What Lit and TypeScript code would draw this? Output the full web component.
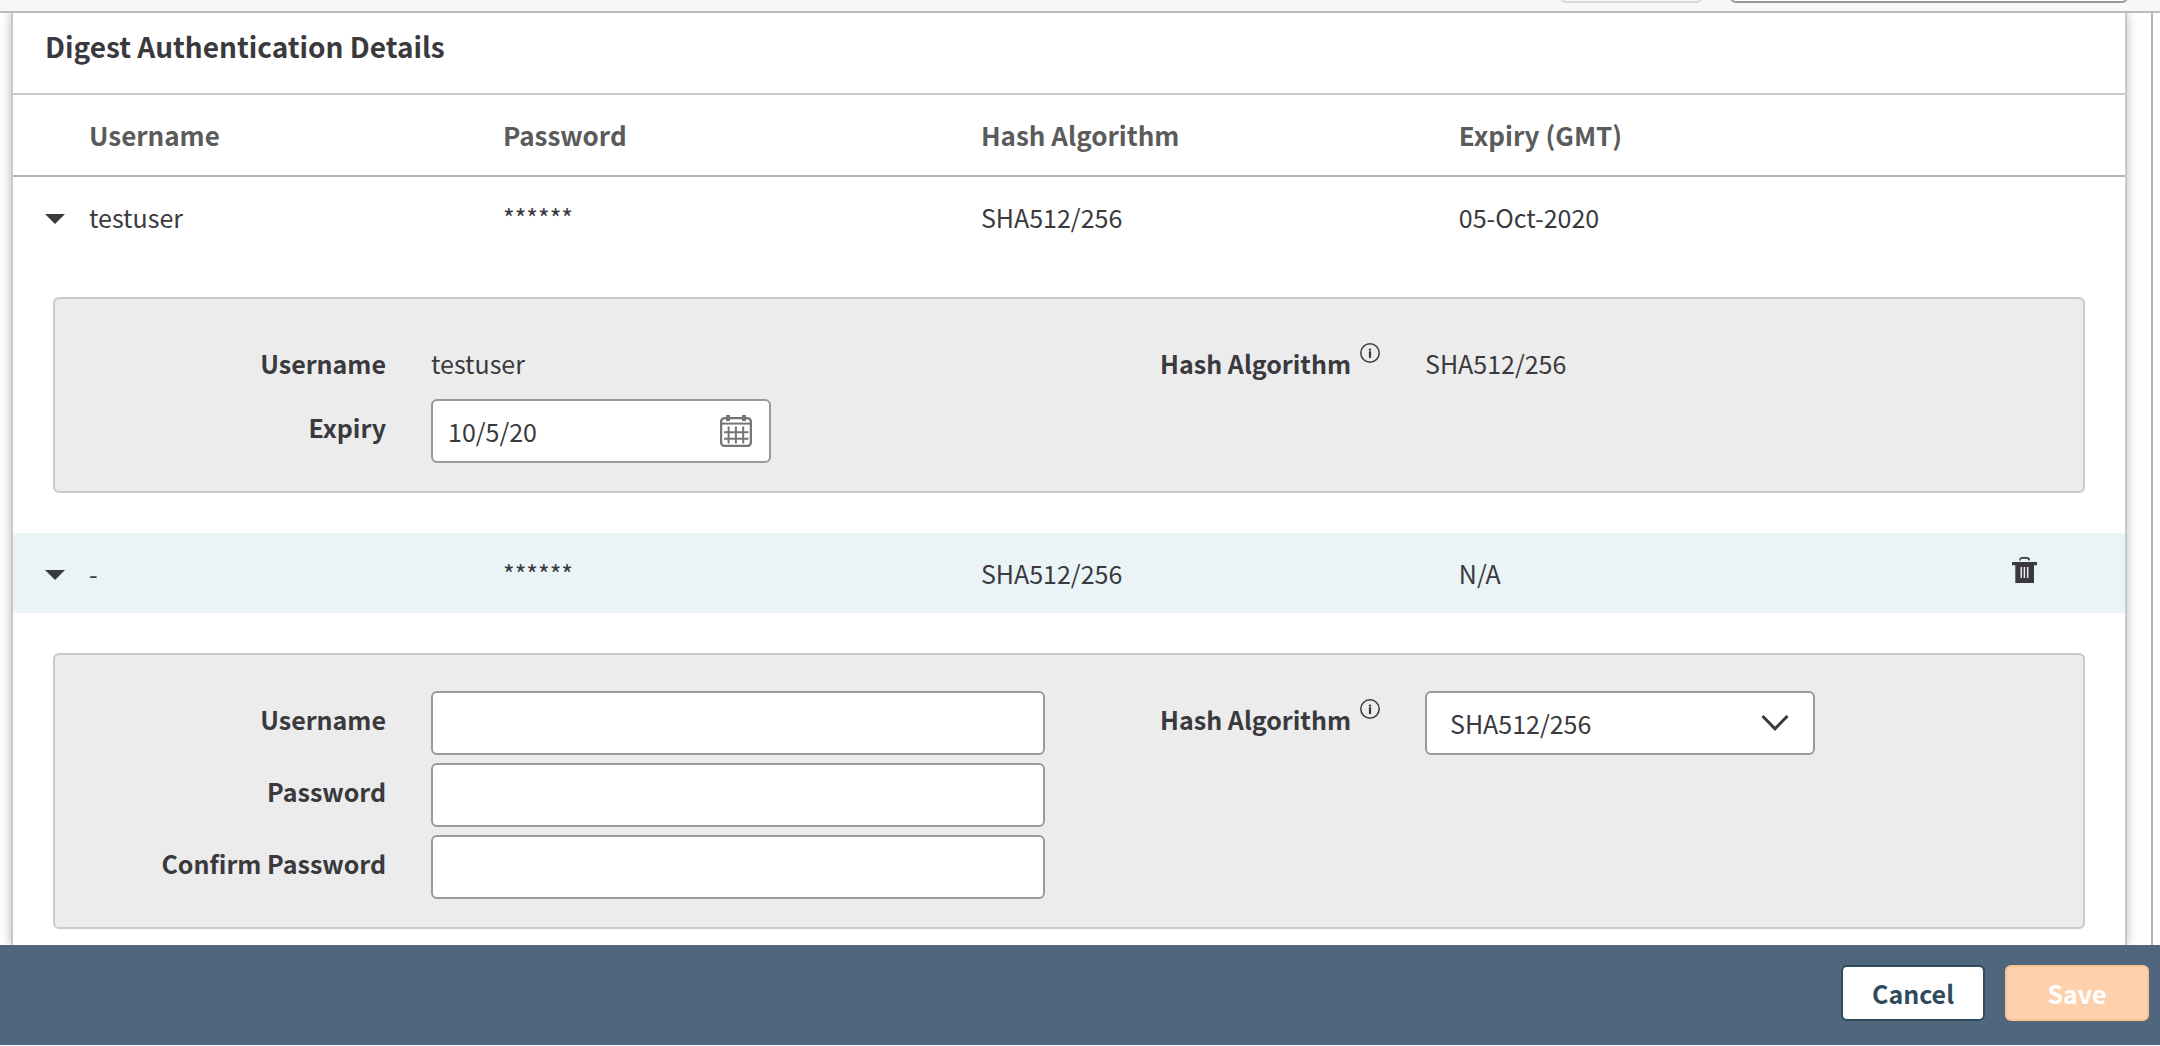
import { LitElement, html, css, svg, nothing } from "lit";
import { customElement, state } from "lit/decorators.js";

interface Credential {
  id: string;
  username: string;
  password: string;
  algorithm: string;
  expiry: string;
  saved: boolean;
}

const caretIcon = svg`<svg class="caret" viewBox="0 0 20 10" width="20" height="10" aria-hidden="true"><path d="M0 0H20L10 10Z" fill="currentColor"/></svg>`;

const infoIcon = svg`<svg class="info" viewBox="0 0 20 20" width="20" height="20" role="img" aria-label="Information"><circle cx="10" cy="10" r="9.2" fill="none" stroke="currentColor" stroke-width="1.5"/><path d="M10 9.2V14.2" stroke="currentColor" stroke-width="2.2" stroke-linecap="round"/><circle cx="10" cy="6.6" r="1.2" fill="currentColor"/></svg>`;

const calendarIcon = svg`<svg viewBox="0 0 32 32" width="32" height="32" aria-hidden="true"><g fill="none" stroke="#757575" stroke-width="2"><rect x="1.1" y="3.1" width="29.8" height="27.8" rx="3.5" stroke-width="2.300"/><path d="M1 8.6H31"/><path d="M8.6 11.5V28.5M15.9 11.5V28.5M23.2 11.5V28.5M4 17.2H28.5M4 23.8H28.5"/></g><path d="M6 0H10V6H6ZM22 0H26V6H22Z" fill="#757575"/></svg>`;

const trashIcon = svg`<svg viewBox="0 0 25 26" width="25" height="26" aria-hidden="true"><path d="M8 3.4C8 1.4 9 .9 10.5 .9H14.5C16 .9 17.2 1.4 17.2 3.4" fill="none" stroke="currentColor" stroke-width="1.6"/><path fill="currentColor" d="M0 5H25V8.3H22V26H3.3V8.3H0Z"/><path d="M9.3 10V21M12.4 10V21M15.7 10V21" stroke="#e6ecee" stroke-width="1.5"/></svg>`;

const chevronIcon = svg`<svg class="chevron" viewBox="0 0 28 18" width="28" height="18" aria-hidden="true"><path d="M1.5 2L14 14.8L26.500 2" fill="none" stroke="currentColor" stroke-width="3"/></svg>`;

@customElement("app-root")
export class AppRoot extends LitElement {
  static styles = css`
    :host {
      display: flex;
      flex-direction: column;
      box-sizing: border-box;
      min-height: 100vh;
      background: #fff;
      color: #3a393e;
      font: 25px/40px "Noto Sans CJK SC", "Noto Sans", sans-serif;
    }
    * {
      box-sizing: border-box;
    }
    .toolbar {
      display: flex;
      align-items: flex-end;
      justify-content: flex-end;
      gap: 28px;
      height: 13px;
      overflow: hidden;
      padding: 0 32px 8px 0;
      background: #f7f7f7;
      border-bottom: 2px solid #bbb;
    }
    .tool,
    .search {
      flex: none;
      height: 56px;
      border: 2px solid #d8d8d8;
      border-radius: 6px;
      background: #f7f7f7;
    }
    .tool {
      width: 142px;
    }
    .search {
      width: 398px;
      border-color: #999;
      background: #fff;
    }
    .content {
      flex: 1;
      display: flex;
      margin-right: 7px;
      padding: 0 24px 0 11px;
      border-right: 2px solid #b5b5b5;
      overflow: hidden;
    }
    .card {
      flex: 1;
      min-width: 0;
      border: solid #c9c9c9;
      border-width: 0 2px;
      box-shadow: 0 0 10px rgba(0, 0, 0, 0.28);
      padding-bottom: 16px;
    }
    .title {
      margin: 0;
      padding: 0 32px 14px;
      font-size: 28px;
      line-height: 66px;
      font-weight: 700;
    }
    .grid {
      width: 100%;
      table-layout: fixed;
      border-spacing: 0;
      border-top: 2px solid #cacaca;
    }
    .col-caret {
      width: 3.6%;
    }
    .col-user {
      width: 19.6%;
    }
    .col-data {
      width: 22.63%;
    }
    .head {
      height: 82px;
      padding: 0;
      border-bottom: 2px solid #b4b4b4;
      color: #5b5b5b;
      font-size: 26px;
      font-weight: 700;
      text-align: left;
    }
    .cell {
      height: 80px;
      padding: 0;
    }
    .draft .cell {
      background: #eaf4f7;
    }
    .icon-button {
      display: flex;
      padding: 0;
      border: 0;
      background: none;
      color: inherit;
      cursor: pointer;
    }
    .toggle {
      padding: 17px 32px 13px;
    }
    .closed .caret {
      transform: rotate(-90deg);
    }
    .remove {
      margin: 0 auto;
      padding: 8px 12px 14px 0;
    }
    .detail {
      padding: 40px;
    }
    .detail-last {
      padding-bottom: 0;
    }
    .panel {
      display: grid;
      grid-template-columns: 1fr 1fr;
      padding: 36px 20px 28px;
      border: 2px solid #cacaca;
      border-radius: 6px;
      background: #ececec;
    }
    .fields {
      display: flex;
      flex-direction: column;
      gap: 8px;
    }
    .field {
      display: grid;
      grid-template-columns: minmax(0, 311fr) minmax(0, 638fr);
      gap: 45px;
      align-items: start;
    }
    .label {
      display: flex;
      align-items: center;
      justify-content: flex-end;
      gap: 9px;
      line-height: 56px;
      font-weight: 700;
      white-space: nowrap;
    }
    .info {
      margin-bottom: 20px;
    }
    .value {
      line-height: 56px;
    }
    .control {
      position: relative;
      display: flex;
      align-items: center;
      height: 64px;
      max-width: 614px;
      border: 2px solid #999;
      border-radius: 6px;
      background: #fff;
    }
    .control-date {
      max-width: 340px;
      padding-right: 17px;
    }
    .control-select {
      max-width: 390px;
    }
    .input,
    .select {
      flex: 1;
      min-width: 0;
      width: 100%;
      height: 100%;
      padding: 0 15px;
      border: 0;
      border-radius: 4px;
      background: none;
      color: inherit;
      font: inherit;
    }
    .select {
      appearance: none;
      padding: 0 60px 0 23px;
    }
    .chevron {
      position: absolute;
      right: 24px;
      pointer-events: none;
    }
    .footer {
      display: flex;
      justify-content: flex-end;
      gap: 20px;
      height: 100px;
      margin-bottom: 1px;
      padding: 20px 11px;
      background: #50667c;
    }
    .action {
      width: 144px;
      height: 56px;
      padding: 0;
      border: 2px solid #304a5d;
      border-radius: 6px;
      background: #fff;
      color: #304a5d;
      font: inherit;
      font-weight: 700;
    }
    .action-save {
      border-color: #fcc294;
      background: #fdd1ae;
      color: #fff;
    }
  `;

  @state() private rows: Credential[] = [
    { id: "first", username: "testuser", password: "******", algorithm: "SHA512/256", expiry: "05-Oct-2020", saved: true },
    { id: "second", username: "-", password: "******", algorithm: "SHA512/256", expiry: "N/A", saved: false },
  ];

  @state() private closed: string[] = [];

  private toggle(id: string) {
    this.closed = this.closed.includes(id) ? this.closed.filter((c) => c !== id) : [...this.closed, id];
  }

  private remove(id: string) {
    this.rows = this.rows.filter((r) => r.id !== id);
  }

  private savedPanel(row: Credential) {
    return html`<div class="panel">
      <div class="fields">
        <div class="field">
          <span class="label">Username</span>
          <span class="value">${row.username}</span>
        </div>
        <div class="field">
          <label class="label" for="expiry">Expiry</label>
          <div class="control control-date">
            <input class="input" id="expiry" type="text" value="10/5/20" />
            <button class="icon-button" type="button" aria-label="Choose date">${calendarIcon}</button>
          </div>
        </div>
      </div>
      <div class="fields">
        <div class="field">
          <span class="label">Hash Algorithm ${infoIcon}</span>
          <span class="value">${row.algorithm}</span>
        </div>
      </div>
    </div>`;
  }

  private textField(id: string, label: string, type: string) {
    return html`<div class="field">
      <label class="label" for=${id}>${label}</label>
      <div class="control"><input class="input" id=${id} type=${type} /></div>
    </div>`;
  }

  private draftPanel() {
    return html`<div class="panel">
      <div class="fields">
        ${this.textField("username", "Username", "text")}
        ${this.textField("password", "Password", "password")}
        ${this.textField("confirm", "Confirm Password", "password")}
      </div>
      <div class="fields">
        <div class="field">
          <label class="label" for="algorithm">Hash Algorithm ${infoIcon}</label>
          <div class="control control-select">
            <select class="select" id="algorithm">
              <option>SHA512/256</option>
            </select>
            ${chevronIcon}
          </div>
        </div>
      </div>
    </div>`;
  }

  private renderRow(row: Credential, last: boolean) {
    const open = !this.closed.includes(row.id);
    return html`<tr class=${row.saved ? "row" : "row draft"}>
        <td class="cell">
          <button
            class="icon-button toggle ${open ? "" : "closed"}"
            type="button"
            aria-label="Toggle details"
            aria-expanded=${open}
            @click=${() => this.toggle(row.id)}
          >
            ${caretIcon}
          </button>
        </td>
        <td class="cell">${row.username}</td>
        <td class="cell">${row.password}</td>
        <td class="cell">${row.algorithm}</td>
        <td class="cell">${row.expiry}</td>
        <td class="cell">
          ${row.saved
            ? nothing
            : html`<button class="icon-button remove" type="button" aria-label="Delete" @click=${() => this.remove(row.id)}>
                ${trashIcon}
              </button>`}
        </td>
      </tr>
      ${open
        ? html`<tr>
            <td class="detail ${last ? "detail-last" : ""}" colspan="6">
              ${row.saved ? this.savedPanel(row) : this.draftPanel()}
            </td>
          </tr>`
        : nothing}`;
  }

  render() {
    return html`
      <div class="toolbar">
        <button class="tool" type="button" disabled aria-label="Apply"></button>
        <input class="search" type="text" aria-label="Search" />
      </div>
      <main class="content">
        <section class="card">
          <h2 class="title">Digest Authentication Details</h2>
          <table class="grid">
            <colgroup>
              <col class="col-caret" />
              <col class="col-user" />
              <col class="col-data" />
              <col class="col-data" />
              <col class="col-data" />
              <col />
            </colgroup>
            <thead>
              <tr>
                <th class="head"></th>
                <th class="head">Username</th>
                <th class="head">Password</th>
                <th class="head">Hash Algorithm</th>
                <th class="head">Expiry (GMT)</th>
                <th class="head"></th>
              </tr>
            </thead>
            <tbody>
              ${this.rows.map((row, i) => this.renderRow(row, i === this.rows.length - 1))}
            </tbody>
          </table>
        </section>
      </main>
      <footer class="footer">
        <button class="action" type="button">Cancel</button>
        <button class="action action-save" type="button" disabled>Save</button>
      </footer>
    `;
  }
}
